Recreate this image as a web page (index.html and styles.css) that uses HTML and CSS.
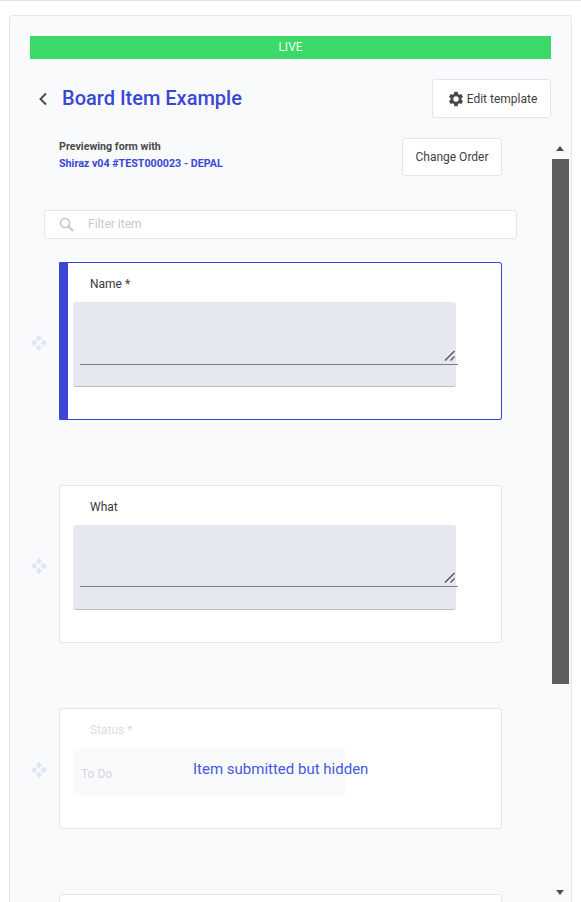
FILE: index.html
```html
<!DOCTYPE html>
<html lang="en">
<head>
  <meta charset="UTF-8" />
  <title>Board Item Example</title>
  <link rel="stylesheet" href="styles.css">
</head>
<body>
  <div class="panel">
    <div class="live-bar">LIVE</div>

    <header class="page-head">
      <div class="head-left">
        <svg class="back-icon" width="10" height="14" viewBox="0 0 10 14"><path d="M8 1.5 2.5 7 8 12.5" fill="none" stroke="#4f4a3f" stroke-width="2"/></svg>
        <h1 class="title">Board Item Example</h1>
      </div>
      <button class="btn btn-edit">
        <svg width="18" height="18" viewBox="0 0 24 24"><path fill="#4a4a4a" d="M19.14 12.94c.04-.3.06-.61.06-.94s-.02-.64-.07-.94l2.03-1.58a.49.49 0 0 0 .12-.61l-1.92-3.32a.49.49 0 0 0-.59-.22l-2.39.96a7 7 0 0 0-1.62-.94l-.36-2.54a.48.48 0 0 0-.48-.41h-3.84a.47.47 0 0 0-.47.41l-.36 2.54c-.59.24-1.13.57-1.62.94l-2.39-.96a.48.48 0 0 0-.59.22L2.74 8.87a.47.47 0 0 0 .12.61l2.03 1.58c-.05.3-.09.63-.09.94s.02.64.07.94l-2.03 1.58a.49.49 0 0 0-.12.61l1.92 3.32c.12.22.37.29.59.22l2.39-.96c.5.38 1.03.7 1.62.94l.36 2.54c.05.24.24.41.48.41h3.84c.24 0 .44-.17.47-.41l.36-2.54c.59-.24 1.13-.56 1.62-.94l2.39.96c.22.08.47 0 .59-.22l1.92-3.32a.46.46 0 0 0-.12-.61l-2.01-1.58zM12 15.6A3.6 3.6 0 1 1 12 8.4a3.6 3.6 0 0 1 0 7.2z"/></svg>
        Edit template
      </button>
    </header>

    <div class="scroller">
      <div class="scroll-body">
        <div class="preview-row">
          <div class="preview-text">
            <div class="preview-label">Previewing form with</div>
            <a class="preview-link">Shiraz v04 #TEST000023 - DEPAL</a>
          </div>
          <button class="btn btn-order">Change Order</button>
        </div>

        <div class="filter">
          <svg width="16" height="16" viewBox="0 0 16 16"><circle cx="6" cy="6" r="4.5" fill="none" stroke="#c4c6c9" stroke-width="1.7"/><path d="m9.500 9.500 4.500 4.500" stroke="#c4c6c9" stroke-width="2"/></svg>
          <span class="filter-text">Filter item</span>
        </div>

        <div class="item-row">
          <svg class="drag" width="18" height="18" viewBox="0 0 18 18"><use href="#drag-icon"/></svg>
          <div class="card card-active">
            <div class="card-label">Name *</div>
            <div class="field">
              <div class="field-line">
                <svg class="grip" width="12" height="12" viewBox="0 0 12 12"><path d="M1 10.5 10.500 1M6.500 10.500l4-4" stroke="#555" stroke-width="1.400" fill="none"/></svg>
              </div>
            </div>
          </div>
        </div>

        <div class="item-row">
          <svg class="drag" width="18" height="18" viewBox="0 0 18 18"><use href="#drag-icon"/></svg>
          <div class="card">
            <div class="card-label">What</div>
            <div class="field">
              <div class="field-line">
                <svg class="grip" width="12" height="12" viewBox="0 0 12 12"><path d="M1 10.5 10.500 1M6.500 10.500l4-4" stroke="#555" stroke-width="1.400" fill="none"/></svg>
              </div>
            </div>
          </div>
        </div>

        <div class="item-row">
          <svg class="drag" width="18" height="18" viewBox="0 0 18 18"><use href="#drag-icon"/></svg>
          <div class="card card-hidden">
            <div class="card-label">Status *</div>
            <div class="select-field">To Do</div>
            <div class="hidden-note">Item submitted but hidden</div>
          </div>
        </div>

        <div class="item-row">
          <div class="drag-space"></div>
          <div class="card card-last"></div>
        </div>
      </div>

      <div class="scrollbar">
        <span class="arrow arrow-up"></span>
        <div class="thumb"></div>
        <span class="arrow arrow-down"></span>
      </div>
    </div>
  </div>

  <svg width="0" height="0" class="defs">
    <defs>
      <g id="drag-icon" fill="#e0e5f8">
        <path d="M9 1l3.200 3.200L9 7.400 5.800 4.200z"/>
        <path d="M9 10.600l3.200 3.200L9 17l-3.200-3.200z"/>
        <path d="M4.200 5.800 7.400 9l-3.200 3.200L1 9z"/>
        <path d="M13.800 5.800 17 9l-3.200 3.200L10.600 9z"/>
      </g>
    </defs>
  </svg>
</body>
</html>
```
FILE: styles.css
```css
:root {
  --blue: #3a47d5;
  --line: #e4e6e9;
  --panel: #f9fafc;
  --text: #4a4a4a;
}

html, body {
  height: 902px;
  overflow: hidden;
}

body {
  margin: 0;
  background-color: #fff;
  border-top: 1px solid #e3e3e3;
  box-sizing: border-box;
  font-family: 'Roboto', sans-serif;
  color: var(--text);
}

.panel {
  margin: 14px 9px 0;
  height: 887px;
  padding: 20px 20px 0;
  box-sizing: border-box;
  background-color: var(--panel);
  border: 1px solid var(--line);
  border-bottom: none;
  border-radius: 4px 4px 0 0;
  overflow: hidden;
}

.live-bar {
  height: 23px;
  line-height: 23px;
  background-color: #3ad968;
  color: #fff;
  font-size: 12px;
  text-align: center;
}

.page-head {
  display: flex;
  justify-content: space-between;
  align-items: center;
  margin-top: 20px;
}

.head-left {
  display: flex;
  align-items: center;
  gap: 14px;
  padding-left: 8px;
}

.title {
  margin: 0 0 2px;
  font-size: 20px;
  font-weight: 500;
  color: var(--blue);
}

.btn {
  display: flex;
  align-items: center;
  justify-content: center;
  background-color: #fff;
  border: 1px solid var(--line);
  border-radius: 3px;
  color: #3f3f3f;
  font-family: inherit;
  font-size: 12px;
  padding: 0;
}

.btn-edit {
  width: 119px;
  height: 39px;
  gap: 2px;
  padding-left: 1px;
}

.btn-order {
  width: 100px;
  height: 38px;
}

.scroller {
  display: flex;
  margin-top: 20px;
  margin-right: -18px;
}

.scroll-body {
  width: 522px;
}

.preview-row {
  display: flex;
  justify-content: space-between;
  align-items: center;
  margin-left: 29px;
  width: 443px;
}

.preview-text {
  margin-bottom: 4px;
  font-size: 10.7px;
  font-weight: 700;
  line-height: 17px;
}

.preview-link {
  color: var(--blue);
}

.filter {
  display: flex;
  align-items: center;
  margin: 34px 0 23px 14px;
  width: 473px;
  height: 29px;
  box-sizing: border-box;
  padding-left: 14px;
  background-color: #fff;
  border: 1px solid var(--line);
  border-radius: 3px;
}

.filter-text {
  margin: 0 0 2px 13px;
  font-size: 12px;
  color: #c6c8cb;
}

.item-row {
  display: flex;
  align-items: center;
  margin-bottom: 65px;
}

.drag {
  flex: none;
  margin: 3px 11px 0 0;
}

.drag-space {
  flex: none;
  width: 29px;
}

.defs {
  position: absolute;
}

.card {
  position: relative;
  width: 443px;
  height: 158px;
  box-sizing: border-box;
  padding: 13px 0 0 13px;
  background-color: #fff;
  border: 1px solid var(--line);
  border-radius: 3px;
}

.card-active {
  border-color: var(--blue);
  border-left: 9px solid var(--blue);
  border-radius: 1px 3px 3px 1px;
  padding-left: 5px;
}

.card-hidden {
  height: 121px;
}

.card-last {
  height: 120px;
}

.card-label {
  margin-left: 17px;
  height: 17px;
  line-height: 17px;
  font-size: 12px;
  color: #3a3a3a;
}

.field {
  margin-top: 9px;
  width: 383px;
  height: 85px;
  box-sizing: border-box;
  padding: 0 0 0 7px;
  background-color: #e5e8f0;
  border-bottom: 1px solid #bcbdc0;
  border-radius: 3px;
}

.field-line {
  display: flex;
  justify-content: flex-end;
  align-items: flex-end;
  width: 378px;
  height: 62px;
  box-sizing: border-box;
  padding-right: 2px;
  border-bottom: 1px solid #808080;
}

.card-active .field-line {
  height: 63px;
}

.grip {
  margin-bottom: 2px;
}

.card-hidden .card-label {
  color: #dcdee1;
}

.select-field {
  margin-top: 9px;
  width: 273px;
  height: 48px;
  box-sizing: border-box;
  padding: 19px 0 0 8px;
  background-color: var(--panel);
  border-radius: 3px;
  font-size: 12px;
  color: #d3d5d9;
}

.hidden-note {
  position: absolute;
  left: 133px;
  top: 51px;
  font-size: 15px;
  color: #4658e0;
}

.scrollbar {
  flex: none;
  position: relative;
  width: 17px;
  height: 760px;
}

.thumb {
  position: absolute;
  top: 21px;
  left: 0;
  width: 17px;
  height: 525px;
  background-color: #5f5f5f;
}

.arrow {
  position: absolute;
  left: 4px;
  width: 0;
  height: 0;
  border-left: 4.5px solid transparent;
  border-right: 4.5px solid transparent;
}

.arrow-up {
  top: 8px;
  border-bottom: 5px solid #505050;
}

.arrow-down {
  top: 752px;
  border-top: 5px solid #505050;
}
```
